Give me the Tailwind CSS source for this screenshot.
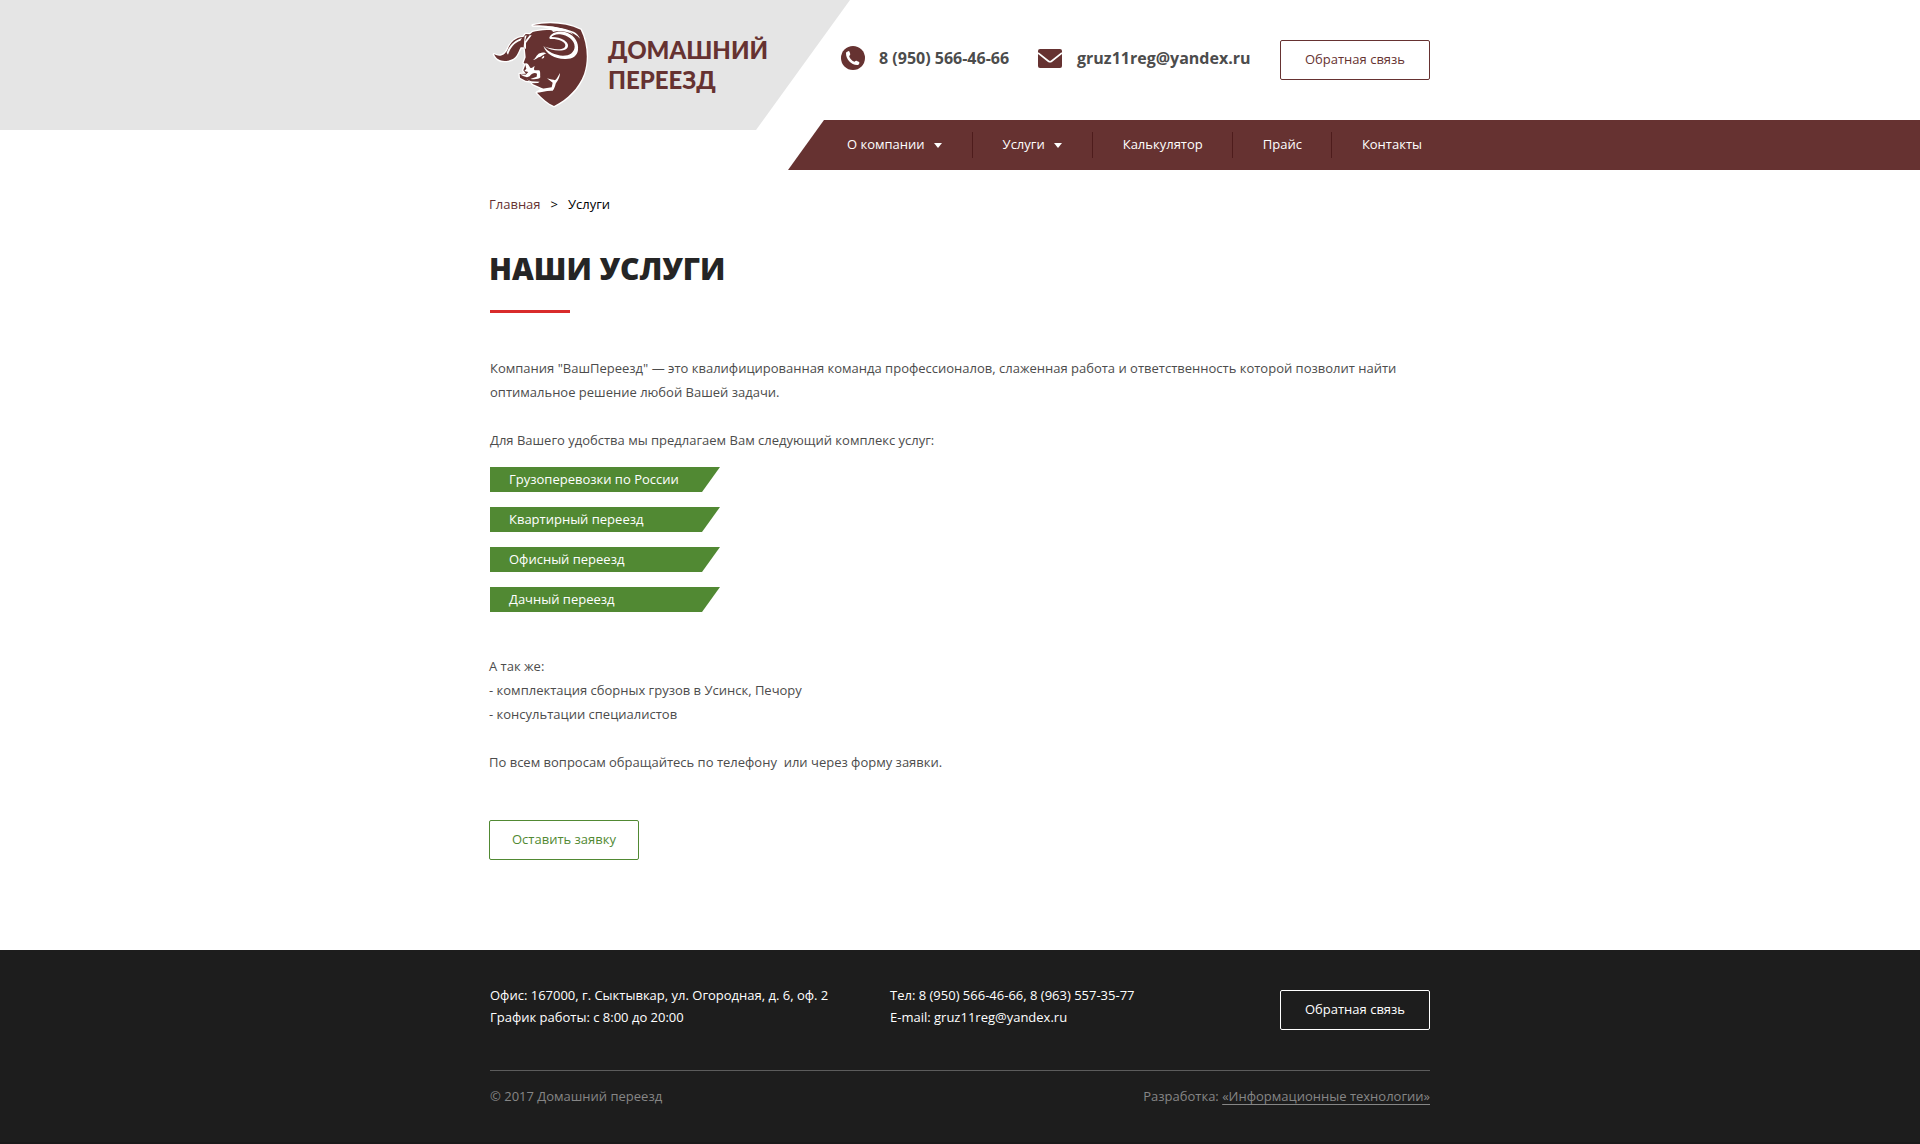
<!DOCTYPE html>
<html lang="ru">
<head>
<meta charset="utf-8">
<meta name="viewport" content="width=device-width, initial-scale=1">
<title>Наши услуги — Домашний переезд</title>
<script src="https://cdn.jsdelivr.net/npm/@tailwindcss/browser@4"></script>
</head>
<body class="flex min-h-screen flex-col bg-white font-['Open_Sans',sans-serif] text-[13px] leading-6 text-[#4c4c4c]">

<header class="flex items-start">
  <div class="flex h-[130px] w-[calc(50%-110px)] shrink-0 bg-[#e5e5e5] pl-[calc(50vw-480px)] [clip-path:polygon(0_0,100%_0,calc(100%-94px)_100%,0_100%)]">
    <a href="#" class="flex items-start pt-2.5 text-[#663231]">
      <svg class="h-[110px] w-[120px] shrink-0" viewBox="0 0 360 330" aria-hidden="true">
        <path fill="#663231" stroke="#fff" stroke-width="8" stroke-linejoin="round" paint-order="stroke" d="M158 46C205 35 258 39 302 59C322 100 326 150 312 192C296 235 262 268 222 288C204 280 186 265 171 248L190 236L158 222L153 214L137 212L120 203L119 192L138 191L130 181L137 163L131 158L137 142L134 112L122 112C113 128 111 148 84 152C65 155 50 150 42 133C62 143 76 134 84 116C92 97 106 82 130 81L137 72L150 73L158 66C174 63 192 58 216 61L219 66C238 60 262 64 280 74C265 56 215 46 158 46Z"/>
        <g fill="#fff">
          <path d="M80 128C88 105 106 90 126 84L121 92C104 97 91 113 84 134Z"/>
          <path d="M134 78L140 76L135 94L149 76L155 76L138 99L138 118L131 110Z"/>
          <path d="M154 49C195 45 246 51 281 65C290 69 297 78 300 86C290 76 282 71 271 67C252 60 228 58 214 61C203 53 180 50 154 49Z"/>
          <path d="M208 83C214 66 240 60 262 68C285 78 297 98 294 120C292 138 277 148 254 147C224 146 199 133 190 108C204 126 225 136 249 137C269 137 283 127 284 110C284 91 262 75 240 73C227 72 217 76 213 83Z"/>
          <path d="M191 109C212 117 240 121 252 114C261 105 254 97 243 92C234 88 222 86 209 87L209 81C225 80 241 83 252 90C265 99 268 109 259 117C244 126 212 122 191 109Z"/>
          <path d="M159 150C168 146 169 134 179 130C187 126 195 127 199 131C190 131 187 139 176 142C171 144 169 149 159 150ZM184 145L191 137C196 140 190 147 184 145Z"/>
          <path d="M135 161C140 157 146 163 149 170C153 179 159 171 164 168C163 173 160 178 164 181L177 181C182 183 180 192 181 202C177 208 163 209 151 207L170 200L171 191C165 187 156 189 149 199C142 204 131 201 121 193L137 194L145 186L133 183L139 176Z"/>
          <path d="M140 208L153 214L179 215L174 219L157 220Z"/>
          <path d="M165 248L187 236L215 232L218 218L201 205C213 209 219 209 225 211C231 207 234 198 240 189C240 203 231 215 227 221C225 230 222 237 218 242C199 241 184 248 165 248Z"/>
        </g>
      </svg>
      <span class="pl-2 pt-[25px] font-['Lato',sans-serif] text-[24px] font-black uppercase leading-[30px]">Домашний<br>переезд</span>
    </a>
  </div>

  <div class="relative -ml-[62px] min-w-0 flex-1">
    <div class="flex h-[120px] items-start pl-[53px] pt-10 text-[16px] font-bold">
      <a href="tel:+79505664666" class="flex items-center gap-3.5 pt-1.5 leading-6">
        <svg class="size-6" viewBox="0 0 24 24" aria-hidden="true"><circle cx="12" cy="12" r="12" fill="#663231"/><path fill="#fff" d="M5.3 6.2L7.6 5.1C8.3 5 8.7 6.2 9.1 7.5C9.4 8.7 9.1 9.3 8.1 10C8.8 12.6 11 15 13.6 15.8C14.4 14.8 15 14.6 16 15C17.3 15.5 18.6 16.1 18.4 16.9C18.2 18 17.4 18.9 16.2 19C10 18.9 4.9 13 5 7.2C5 6.8 5.1 6.4 5.3 6.2Z"/></svg>
        <span class="w-[130px] whitespace-nowrap">8 (950) 566-46-66</span>
      </a>
      <a href="mailto:gruz11reg@yandex.ru" class="ml-[29px] flex items-center gap-[15px] pt-1.5 leading-6">
        <svg class="h-[19px] w-6" viewBox="0 0 24 19" aria-hidden="true"><rect width="24" height="19" rx="2" fill="#663231"/><path d="M0 4L10.5 12.2Q12 13.2 13.5 12.2L24 4" fill="none" stroke="#fff" stroke-width="1.7"/></svg>
        <span class="w-[174px] whitespace-nowrap">gruz11reg@yandex.ru</span>
      </a>
      <button type="button" class="ml-[29px] h-10 w-[150px] shrink-0 rounded-xs border border-[#663231] pb-0.5 text-[13px] font-normal text-[#663231]">Обратная связь</button>
    </div>
    <nav class="flex h-[50px] items-center bg-[#663231] pl-[29px] text-white [clip-path:polygon(36px_0,100%_0,100%_100%,0_100%)]">
      <a href="#" class="flex items-center gap-[9px] pb-0.5 pl-[30px] pr-[30px]">О компании <svg class="mt-0.5 h-[5px] w-2" viewBox="0 0 8 5" aria-hidden="true"><path d="M0 0H8L4 5Z" fill="#fff"/></svg></a>
      <a href="#" class="flex items-center gap-[9px] border-l border-[#4e1c1c] pb-0.5 pl-[30px] pr-[30px]">Услуги <svg class="mt-0.5 h-[5px] w-2" viewBox="0 0 8 5" aria-hidden="true"><path d="M0 0H8L4 5Z" fill="#fff"/></svg></a>
      <a href="#" class="border-l border-[#4e1c1c] pb-0.5 pl-[30px] pr-[29px]">Калькулятор</a>
      <a href="#" class="border-l border-[#4e1c1c] pb-0.5 pl-[30px] pr-[29px]">Прайс</a>
      <a href="#" class="border-l border-[#4e1c1c] pb-0.5 pl-[30px] pr-[29px]">Контакты</a>
    </nav>
  </div>
</header>

<main class="mx-auto w-full max-w-[940px] flex-1 pb-[90px] pt-[22px]">
  <div class="-ml-px">
    <div class="flex gap-2.5 text-black">
      <a href="#" class="text-[#663231]">Главная</a><span>&gt;</span><span>Услуги</span>
    </div>
    <h1 class="mt-[33px] text-[30px] font-extrabold uppercase leading-10 text-[#252525]">Наши услуги</h1>
  </div>
  <div class="mt-[21px] h-[3px] w-20 bg-[#d92b2b]"></div>
  <p class="mt-[43px]">Компания "ВашПереезд" — это квалифицированная команда профессионалов, слаженная работа и ответственность которой позволит найти оптимальное решение любой Вашей задачи.</p>
  <p class="mt-6">Для Вашего удобства мы предлагаем Вам следующий комплекс услуг:</p>
  <ul class="mt-[15px] flex flex-col gap-[15px] text-white">
    <li><a href="#" class="block h-[25px] w-[230px] bg-[#518933] pl-[19px] leading-[25px] [clip-path:polygon(0_0,100%_0,calc(100%-18px)_100%,0_100%)]">Грузоперевозки по России</a></li>
    <li><a href="#" class="block h-[25px] w-[230px] bg-[#518933] pl-[19px] leading-[25px] [clip-path:polygon(0_0,100%_0,calc(100%-18px)_100%,0_100%)]">Квартирный переезд</a></li>
    <li><a href="#" class="block h-[25px] w-[230px] bg-[#518933] pl-[19px] leading-[25px] [clip-path:polygon(0_0,100%_0,calc(100%-18px)_100%,0_100%)]">Офисный переезд</a></li>
    <li><a href="#" class="block h-[25px] w-[230px] bg-[#518933] pl-[19px] leading-[25px] [clip-path:polygon(0_0,100%_0,calc(100%-18px)_100%,0_100%)]">Дачный переезд</a></li>
  </ul>
  <div class="-ml-px">
    <p class="mt-[42px]">А так же:<br>- комплектация сборных грузов в Усинск, Печору<br>- консультации специалистов</p>
    <p class="mt-6">По всем вопросам обращайтесь по телефону&nbsp; или через форму заявки.</p>
    <button type="button" class="mt-[46px] block h-10 w-[150px] rounded-xs border border-[#518933] pb-0.5 text-[#518933]">Оставить заявку</button>
  </div>
</main>

<footer class="border-b-2 border-[#1a191a] bg-[#1d1d1d] text-white">
  <div class="mx-auto max-w-[940px] pb-[34px] pt-[34px]">
    <div class="flex items-start pb-10 leading-[22px]">
      <p class="w-[400px]">Офис: 167000, г. Сыктывкар, ул. Огородная, д. 6, оф. 2<br>График работы: с 8:00 до 20:00</p>
      <p>Тел: 8 (950) 566-46-66, 8 (963) 557-35-77<br>E-mail: gruz11reg@yandex.ru</p>
      <button type="button" class="ml-auto mt-1.5 h-10 w-[150px] rounded-xs border border-white pb-0.5">Обратная связь</button>
    </div>
    <div class="flex justify-between border-t border-[#5c5c5c] pt-[13px] text-[#868686]">
      <p>© 2017 Домашний переезд</p>
      <p>Разработка: <a href="#" class="underline underline-offset-3">«Информационные технологии»</a></p>
    </div>
  </div>
</footer>
</body>
</html>
